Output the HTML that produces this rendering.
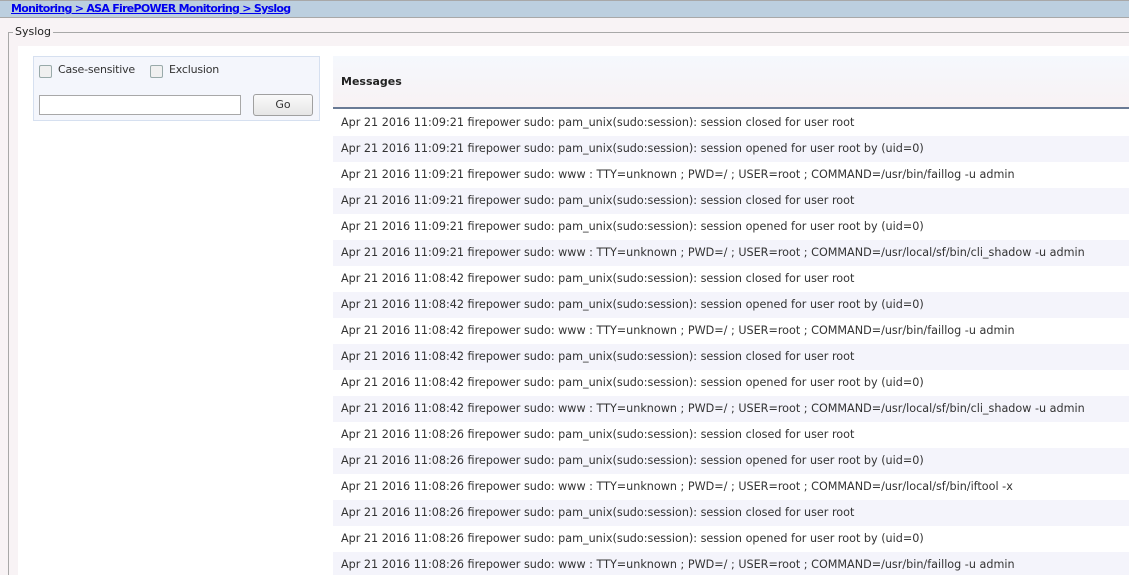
<!DOCTYPE html>
<html style="overflow:hidden;width:1129px;height:575px"><head><style>
body{margin:0;width:1129px;height:575px;overflow:hidden;background:#f8f3f5;font-family:Tahoma,"DejaVu Sans","Liberation Sans",sans-serif;position:relative}
.hdr{position:absolute;left:0;top:0;width:1129px;height:18px;background:#bccfdf;border-top:1px solid #a8a8a8;border-bottom:1px solid #a8a8a8;box-sizing:border-box}
.hdr a{position:absolute;left:11px;top:1px;font-size:11px;font-weight:bold;color:#0000ee;text-decoration:underline;font-family:"DejaVu Sans",sans-serif;letter-spacing:-0.72px}
.fs{position:absolute;left:8px;top:32px;width:1121px;height:543px;border-left:1px solid #a8a8a8;border-top:1px solid #a8a8a8;box-sizing:border-box}
.lg{position:absolute;left:13px;top:25px;background:#f8f3f5;padding:0 2px;font-size:11px;color:#222;font-family:"DejaVu Sans",sans-serif}
.white{position:absolute;left:18px;top:46px;width:1111px;height:529px;background:#fff}
.filter{position:absolute;left:33px;top:56px;width:285px;height:63px;background:#f4f6fc;border:1px solid #d6e0f0}
.cb{position:absolute;top:8px;width:11px;height:11px;border:1px solid #9aa;border-radius:2px;background:#f0f0f0}
.lbl{position:absolute;top:6px;font-size:11px;color:#333;font-family:"DejaVu Sans",sans-serif;letter-spacing:-0.2px}
.inp{position:absolute;left:5px;top:38px;width:200px;height:18px;border:1px solid #a8a8a8;background:#fff}
.btn{position:absolute;left:219px;top:37px;width:58px;height:20px;border:1px solid #a0a0a0;border-radius:3px;background:linear-gradient(#fafafa,#e6e6e6);font-size:11px;text-align:center;line-height:20px;color:#333;font-family:"DejaVu Sans",sans-serif}
.mh{position:absolute;left:333px;top:56px;width:796px;height:51px;background:linear-gradient(#f5f8fd,#f8f2f4);border-bottom:2px solid #6a7a95}
.mh b{position:absolute;left:8px;top:19px;font-size:11px;color:#222;font-family:"DejaVu Sans",sans-serif}
.rows{position:absolute;left:333px;top:110px;width:796px}
.r{height:26px;line-height:26px;padding-left:8px;font-size:11.2px;color:#333;white-space:nowrap;font-family:"DejaVu Sans",sans-serif}
.r:nth-child(even){background:#f4f4fb}
</style></head><body>
<div class="hdr"><a>Monitoring &gt; ASA FirePOWER Monitoring &gt; Syslog</a></div>
<div class="fs"></div>
<div class="lg">Syslog</div>
<div class="white"></div>
<div class="filter">
<div class="cb" style="left:5px"></div><span class="lbl" style="left:24px">Case-sensitive</span>
<div class="cb" style="left:116px"></div><span class="lbl" style="left:135px">Exclusion</span>
<div class="inp"></div><div class="btn">Go</div>
</div>
<div class="mh"><b>Messages</b></div>
<div class="rows">
<div class="r">Apr 21 2016 11:09:21 firepower sudo: pam_unix(sudo:session): session closed for user root</div>
<div class="r">Apr 21 2016 11:09:21 firepower sudo: pam_unix(sudo:session): session opened for user root by (uid=0)</div>
<div class="r">Apr 21 2016 11:09:21 firepower sudo: www : TTY=unknown ; PWD=/ ; USER=root ; COMMAND=/usr/bin/faillog -u admin</div>
<div class="r">Apr 21 2016 11:09:21 firepower sudo: pam_unix(sudo:session): session closed for user root</div>
<div class="r">Apr 21 2016 11:09:21 firepower sudo: pam_unix(sudo:session): session opened for user root by (uid=0)</div>
<div class="r">Apr 21 2016 11:09:21 firepower sudo: www : TTY=unknown ; PWD=/ ; USER=root ; COMMAND=/usr/local/sf/bin/cli_shadow -u admin</div>
<div class="r">Apr 21 2016 11:08:42 firepower sudo: pam_unix(sudo:session): session closed for user root</div>
<div class="r">Apr 21 2016 11:08:42 firepower sudo: pam_unix(sudo:session): session opened for user root by (uid=0)</div>
<div class="r">Apr 21 2016 11:08:42 firepower sudo: www : TTY=unknown ; PWD=/ ; USER=root ; COMMAND=/usr/bin/faillog -u admin</div>
<div class="r">Apr 21 2016 11:08:42 firepower sudo: pam_unix(sudo:session): session closed for user root</div>
<div class="r">Apr 21 2016 11:08:42 firepower sudo: pam_unix(sudo:session): session opened for user root by (uid=0)</div>
<div class="r">Apr 21 2016 11:08:42 firepower sudo: www : TTY=unknown ; PWD=/ ; USER=root ; COMMAND=/usr/local/sf/bin/cli_shadow -u admin</div>
<div class="r">Apr 21 2016 11:08:26 firepower sudo: pam_unix(sudo:session): session closed for user root</div>
<div class="r">Apr 21 2016 11:08:26 firepower sudo: pam_unix(sudo:session): session opened for user root by (uid=0)</div>
<div class="r">Apr 21 2016 11:08:26 firepower sudo: www : TTY=unknown ; PWD=/ ; USER=root ; COMMAND=/usr/local/sf/bin/iftool -x</div>
<div class="r">Apr 21 2016 11:08:26 firepower sudo: pam_unix(sudo:session): session closed for user root</div>
<div class="r">Apr 21 2016 11:08:26 firepower sudo: pam_unix(sudo:session): session opened for user root by (uid=0)</div>
<div class="r">Apr 21 2016 11:08:26 firepower sudo: www : TTY=unknown ; PWD=/ ; USER=root ; COMMAND=/usr/bin/faillog -u admin</div>
</div>
</body></html>
